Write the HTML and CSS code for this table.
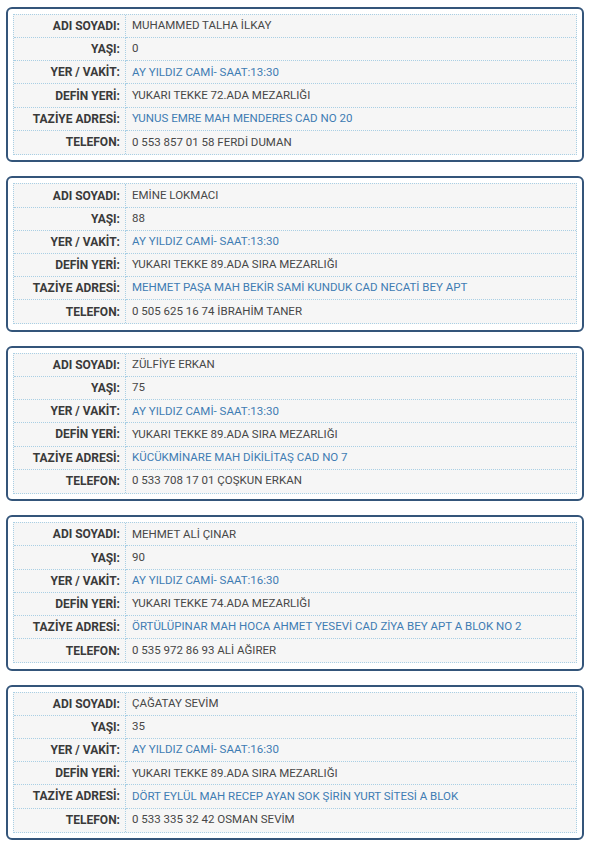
FILE: index.html
```html
<!DOCTYPE html>
<html lang="tr">
<head>
<meta charset="utf-8">
<link rel="stylesheet" href="styles.css">
</head>
<body>
<div class="list">
  <div class="card">
    <div class="info">
      <div class="k">ADI SOYADI:</div><div class="v">MUHAMMED TALHA İLKAY</div>
      <div class="k">YAŞI:</div><div class="v">0</div>
      <div class="k">YER / VAKİT:</div><div class="v link">AY YILDIZ CAMİ- SAAT:13:30</div>
      <div class="k">DEFİN YERİ:</div><div class="v">YUKARI TEKKE 72.ADA MEZARLIĞI</div>
      <div class="k">TAZİYE ADRESİ:</div><div class="v link">YUNUS EMRE MAH MENDERES CAD NO 20</div>
      <div class="k last">TELEFON:</div><div class="v last">0 553 857 01 58 FERDİ DUMAN</div>
    </div>
  </div>
  <div class="card">
    <div class="info">
      <div class="k">ADI SOYADI:</div><div class="v">EMİNE LOKMACI</div>
      <div class="k">YAŞI:</div><div class="v">88</div>
      <div class="k">YER / VAKİT:</div><div class="v link">AY YILDIZ CAMİ- SAAT:13:30</div>
      <div class="k">DEFİN YERİ:</div><div class="v">YUKARI TEKKE 89.ADA SIRA MEZARLIĞI</div>
      <div class="k">TAZİYE ADRESİ:</div><div class="v link">MEHMET PAŞA MAH BEKİR SAMİ KUNDUK CAD NECATİ BEY APT</div>
      <div class="k last">TELEFON:</div><div class="v last">0 505 625 16 74 İBRAHİM TANER</div>
    </div>
  </div>
  <div class="card">
    <div class="info">
      <div class="k">ADI SOYADI:</div><div class="v">ZÜLFİYE ERKAN</div>
      <div class="k">YAŞI:</div><div class="v">75</div>
      <div class="k">YER / VAKİT:</div><div class="v link">AY YILDIZ CAMİ- SAAT:13:30</div>
      <div class="k">DEFİN YERİ:</div><div class="v">YUKARI TEKKE 89.ADA SIRA MEZARLIĞI</div>
      <div class="k">TAZİYE ADRESİ:</div><div class="v link">KÜCÜKMİNARE MAH DİKİLİTAŞ CAD NO 7</div>
      <div class="k last">TELEFON:</div><div class="v last">0 533 708 17 01 ÇOŞKUN ERKAN</div>
    </div>
  </div>
  <div class="card">
    <div class="info">
      <div class="k">ADI SOYADI:</div><div class="v">MEHMET ALİ ÇINAR</div>
      <div class="k">YAŞI:</div><div class="v">90</div>
      <div class="k">YER / VAKİT:</div><div class="v link">AY YILDIZ CAMİ- SAAT:16:30</div>
      <div class="k">DEFİN YERİ:</div><div class="v">YUKARI TEKKE 74.ADA MEZARLIĞI</div>
      <div class="k">TAZİYE ADRESİ:</div><div class="v link">ÖRTÜLÜPINAR MAH HOCA AHMET YESEVİ CAD ZİYA BEY APT A BLOK NO 2</div>
      <div class="k last">TELEFON:</div><div class="v last">0 535 972 86 93 ALİ AĞIRER</div>
    </div>
  </div>
  <div class="card">
    <div class="info">
      <div class="k">ADI SOYADI:</div><div class="v">ÇAĞATAY SEVİM</div>
      <div class="k">YAŞI:</div><div class="v">35</div>
      <div class="k">YER / VAKİT:</div><div class="v link">AY YILDIZ CAMİ- SAAT:16:30</div>
      <div class="k">DEFİN YERİ:</div><div class="v">YUKARI TEKKE 89.ADA SIRA MEZARLIĞI</div>
      <div class="k">TAZİYE ADRESİ:</div><div class="v link">DÖRT EYLÜL MAH RECEP AYAN SOK ŞİRİN YURT SİTESİ A BLOK</div>
      <div class="k last">TELEFON:</div><div class="v last">0 533 335 32 42 OSMAN SEVİM</div>
    </div>
  </div>
</div>
</body>
</html>
```

FILE: styles.css
```css
html, body {
  margin: 0;
  padding: 0;
  background: #ffffff;
}
body {
  font-family: "Roboto", "Liberation Sans", sans-serif;
  font-size: 11.5px;
  color: #454545;
}
.list {
  width: 578px;
  margin: 7px 0 0 6px;
  display: flex;
  flex-direction: column;
  gap: 14px;
}
.card {
  border: 2px solid #34557a;
  border-radius: 6px;
  padding: 5px 5px 5.5px 5px;
  background: #ffffff;
}
.info {
  display: grid;
  grid-template-columns: 112px 1fr;
  grid-auto-rows: 23.17px;
  background: #f6f6f6;
  border: 1px dotted #a9cfe4;
}
.k,
.v {
  box-sizing: border-box;
  display: flex;
  align-items: center;
  border-bottom: 1px dotted #a9cfe4;
  white-space: nowrap;
  line-height: 1;
}
.k.last,
.v.last {
  border-bottom: none;
}
.k {
  justify-content: flex-end;
  padding-right: 5px;
  border-right: 1px dotted #a9cfe4;
  font-size: 12px;
  font-weight: 700;
  color: #3a3a3a;
}
.v {
  padding-left: 6px;
  color: #474747;
}
.v.link {
  color: #3e7cb3;
}
```
